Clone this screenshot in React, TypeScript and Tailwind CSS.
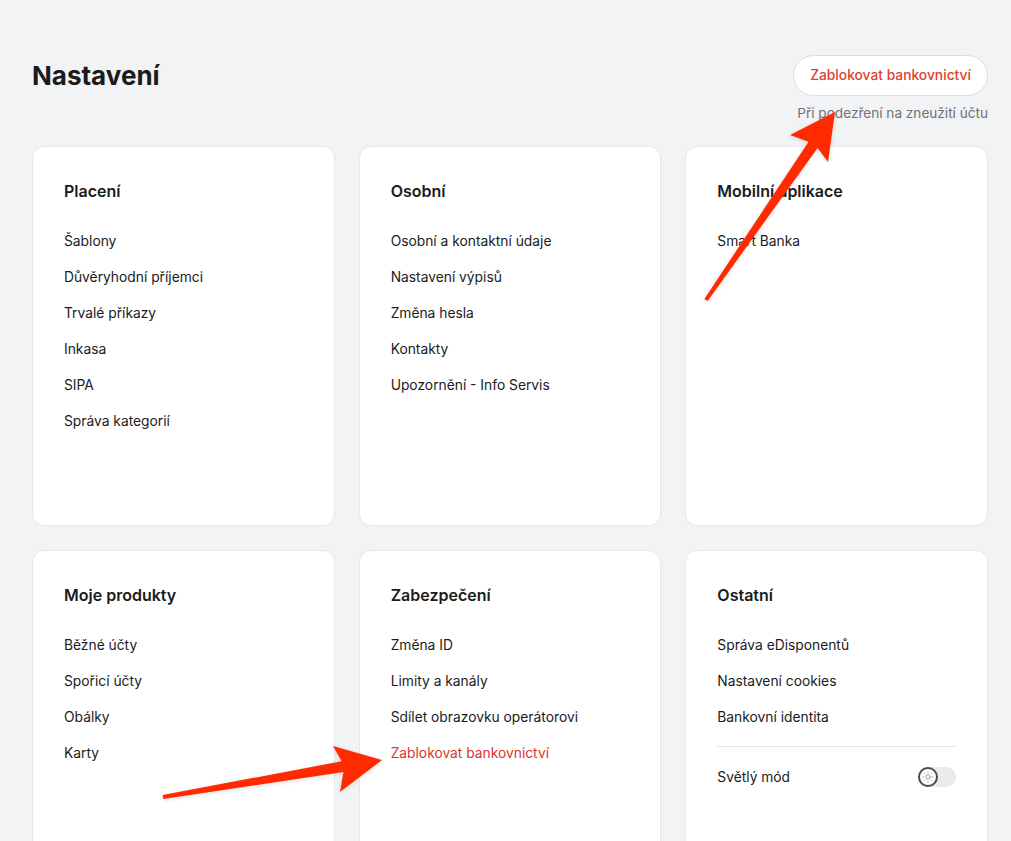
import { Sun } from "lucide-react";

const sections = [
  { title: "Placení", items: ["Šablony", "Důvěryhodní příjemci", "Trvalé příkazy", "Inkasa", "SIPA", "Správa kategorií"] },
  { title: "Osobní", items: ["Osobní a kontaktní údaje", "Nastavení výpisů", "Změna hesla", "Kontakty", "Upozornění - Info Servis"] },
  { title: "Mobilní aplikace", items: ["Smart Banka"] },
  { title: "Moje produkty", items: ["Běžné účty", "Spořicí účty", "Obálky", "Karty"] },
  { title: "Zabezpečení", items: ["Změna ID", "Limity a kanály", "Sdílet obrazovku operátorovi", "Zablokovat bankovnictví"] },
  { title: "Ostatní", items: ["Správa eDisponentů", "Nastavení cookies", "Bankovní identita"] },
];

function Card({ title, items, extra }: { title: string; items: string[]; extra?: boolean }) {
  return (
    <div className="h-[380px] rounded-xl border border-[#e6e7ea] bg-white px-[31px] pt-8">
      <h2 className="text-base leading-6 font-semibold text-[#1b1b1d]">{title}</h2>
      <ul className="mt-7 flex flex-col gap-4">
        {items.map((it) => (
          <li
            key={it}
            className={`text-[13.8px] leading-5 ${it === "Zablokovat bankovnictví" ? "text-[#d9362c]" : "text-[#1b1b1d]"}`}
          >
            {it}
          </li>
        ))}
      </ul>
      {extra && (
        <>
          <div className="mt-[19px] h-px bg-[#e6e7ea]" />
          <div className="mt-5 flex items-center justify-between">
            <span className="text-[13.8px] leading-5 text-[#1b1b1d]">Světlý mód</span>
            <div className="flex h-5 w-[38px] items-center rounded-full bg-[#ebebed]">
              <div className="flex h-5 w-5 items-center justify-center rounded-full border-2 border-[#4a4a4d] bg-white">
                <Sun size={12} strokeWidth={1.5} className="text-[#8a8a8e]" />
              </div>
            </div>
          </div>
        </>
      )}
    </div>
  );
}

export default function App() {
  return (
    <div
      className="relative h-[841px] overflow-hidden bg-[#f2f3f5] pl-8 pr-[23px] pt-[55px]"
      style={{ fontFamily: "Inter, 'Noto Sans', sans-serif" }}
    >
      {/* Header */}
      <div className="flex items-start justify-between">
        <div className="flex h-[41px] items-center">
          <h1 className="text-[26px] font-bold text-[#1b1b1d]">Nastavení</h1>
        </div>
        <div className="flex flex-col items-end">
          <button className="h-[41px] rounded-full border border-[#dcdde0] bg-white px-4 text-[13.8px] font-medium text-[#e0402f]">
            Zablokovat bankovnictví
          </button>
          <p className="mt-[7px] text-[13.6px] leading-5 text-[#6f7177]">Při podezření na zneužití účtu</p>
        </div>
      </div>

      {/* Cards */}
      <div className="mt-[23px] grid grid-cols-3 gap-6">
        {sections.map((s, i) => (
          <Card key={s.title} title={s.title} items={s.items} extra={i === 5} />
        ))}
      </div>

      {/* Annotation arrows */}
      <svg
        className="pointer-events-none absolute inset-0 drop-shadow-sm"
        width="1011"
        height="841"
        viewBox="0 0 1011 841"
      >
        <polygon
          fill="#ff2a00"
          points="707.6,301.1 817.6,147.9 828,162 835,112 790,135 808.6,141.7 704.4,298.9"
        />
        <polygon
          fill="#ff2a00"
          points="163.3,799 343.5,772.1 340,792 382,760 333,746 341.7,761.3 162.7,795"
        />
      </svg>
    </div>
  );
}
